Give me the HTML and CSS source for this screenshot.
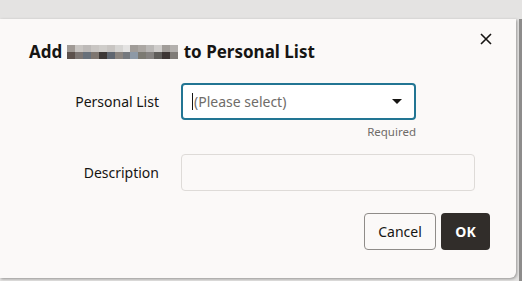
FILE: index.html
```html
<!DOCTYPE html>
<html lang="en">
<head>
    <meta charset="UTF-8">
    <meta name="viewport" content="width=device-width, initial-scale=1.0">
    <title>Add to Personal List</title>
    <link rel="stylesheet" href="styles.css">
</head>
<body>
    <div class="backdrop">
        <div class="dialog">
            <div class="dialog-header">
                <h1 class="dialog-title">Add <span class="blur"><i style="background:#a09a95"></i><i style="background:#c8c5c2"></i><i style="background:#bdbab8"></i><i style="background:#c9c6c3"></i><i style="background:#cfcdca"></i><i style="background:#c8c5c2"></i><i style="background:#d6d5d3"></i><i style="background:#e4e3e2"></i><i style="background:#a09c98"></i><i style="background:#aba7a3"></i><i style="background:#bab8b6"></i><i style="background:#cfcdcb"></i><i style="background:#a19d99"></i><i style="background:#b3b0ad"></i><i style="background:#5c514c"></i><i style="background:#7b7572"></i><i style="background:#67707a"></i><i style="background:#7e7670"></i><i style="background:#3d3836"></i><i style="background:#5f6670"></i><i style="background:#8a847f"></i><i style="background:#75797e"></i><i style="background:#8d99a6"></i><i style="background:#7c7a72"></i><i style="background:#858280"></i><i style="background:#5f5d5a"></i><i style="background:#3d3634"></i><i style="background:#7f7b77"></i></span> to Personal List</h1>
                <button class="close-btn" aria-label="Close">
                    <svg width="12" height="12" viewBox="0 0 12 12"><path d="M1 1 L11 11 M11 1 L1 11" stroke="#161513" stroke-width="1.6" fill="none"/></svg>
                </button>
            </div>

            <div class="form">
                <label class="form-label">Personal List</label>
                <div class="field">
                    <div class="select">
                        <span class="placeholder">(Please select)</span>
                        <svg class="arrow" width="10" height="5" viewBox="0 0 10 5"><path d="M0 0 H10 L5 5 Z" fill="#161513"/></svg>
                    </div>
                    <div class="hint">Required</div>
                </div>

                <label class="form-label">Description</label>
                <div class="field">
                    <div class="text-input"></div>
                </div>
            </div>

            <div class="dialog-footer">
                <button class="btn btn-cancel">Cancel</button>
                <button class="btn btn-ok">OK</button>
            </div>
        </div>
        <div class="side-strip"></div>
    </div>
</body>
</html>
```

FILE: styles.css
```css
body {
    margin: 0;
    background-color: #e4e3e2;
    font-family: "Noto Sans", "Open Sans", sans-serif;
    color: #161513;
}

.backdrop {
    display: flex;
    padding-top: 19px;
    height: 262px;
}

.dialog {
    width: 516px;
    height: 259px;
    background-color: #fbf9f8;
    border-radius: 0 0 6px 0;
    box-shadow: 1px 1px 3px rgba(0, 0, 0, 0.35);
    box-sizing: border-box;
}

.side-strip {
    margin-left: 3px;
    width: 3px;
    background-color: #8d8c8b;
}

.dialog-header {
    display: flex;
    justify-content: space-between;
    align-items: flex-start;
    padding: 22px 24px 0 29px;
}

.dialog-title {
    margin: 0;
    font-size: 17px;
    line-height: 21px;
    font-weight: 700;
    display: flex;
    align-items: center;
}

.blur {
    display: inline-grid;
    grid-template-columns: repeat(14, 7.9px);
    grid-template-rows: 7px 7px;
    margin: 0 6px 0 5px;
}

.blur i {
    display: block;
}

.close-btn {
    background: none;
    border: none;
    padding: 0;
    margin-top: -8px;
    width: 12px;
    height: 12px;
    cursor: pointer;
}

.form {
    display: grid;
    grid-template-columns: 159px auto;
    column-gap: 22px;
    margin-top: 21px;
}

.form-label {
    text-align: right;
    font-size: 14px;
    line-height: 37px;
}

.field {
    display: flex;
    flex-direction: column;
}

.select {
    width: 235px;
    height: 37px;
    box-sizing: border-box;
    border: 2px solid #227593;
    border-radius: 4px;
    background-color: #fff;
    display: flex;
    align-items: center;
    justify-content: space-between;
    padding: 0 12px 0 9px;
}

.placeholder {
    font-size: 14px;
    color: #6f6c69;
    border-left: 1px solid #161513;
    padding-left: 1px;
    line-height: 17px;
}

.hint {
    width: 235px;
    text-align: right;
    font-size: 11.5px;
    color: #6f6c69;
    line-height: 24px;
    margin-bottom: 10px;
}

.text-input {
    width: 294px;
    height: 37px;
    box-sizing: border-box;
    border: 1px solid #dedbd8;
    border-radius: 4px;
    background-color: #fbf9f8;
}

.dialog-footer {
    display: flex;
    justify-content: flex-end;
    gap: 5px;
    padding: 22px 26px 0 0;
}

.btn {
    height: 37px;
    border-radius: 4px;
    font-family: inherit;
    font-size: 14px;
    cursor: pointer;
}

.btn-cancel {
    width: 72px;
    border: 1px solid #8f8c89;
    background-color: #fbf9f8;
    color: #161513;
}

.btn-ok {
    width: 49px;
    border: none;
    background-color: #312d2a;
    color: #fff;
    font-weight: 700;
}
```
